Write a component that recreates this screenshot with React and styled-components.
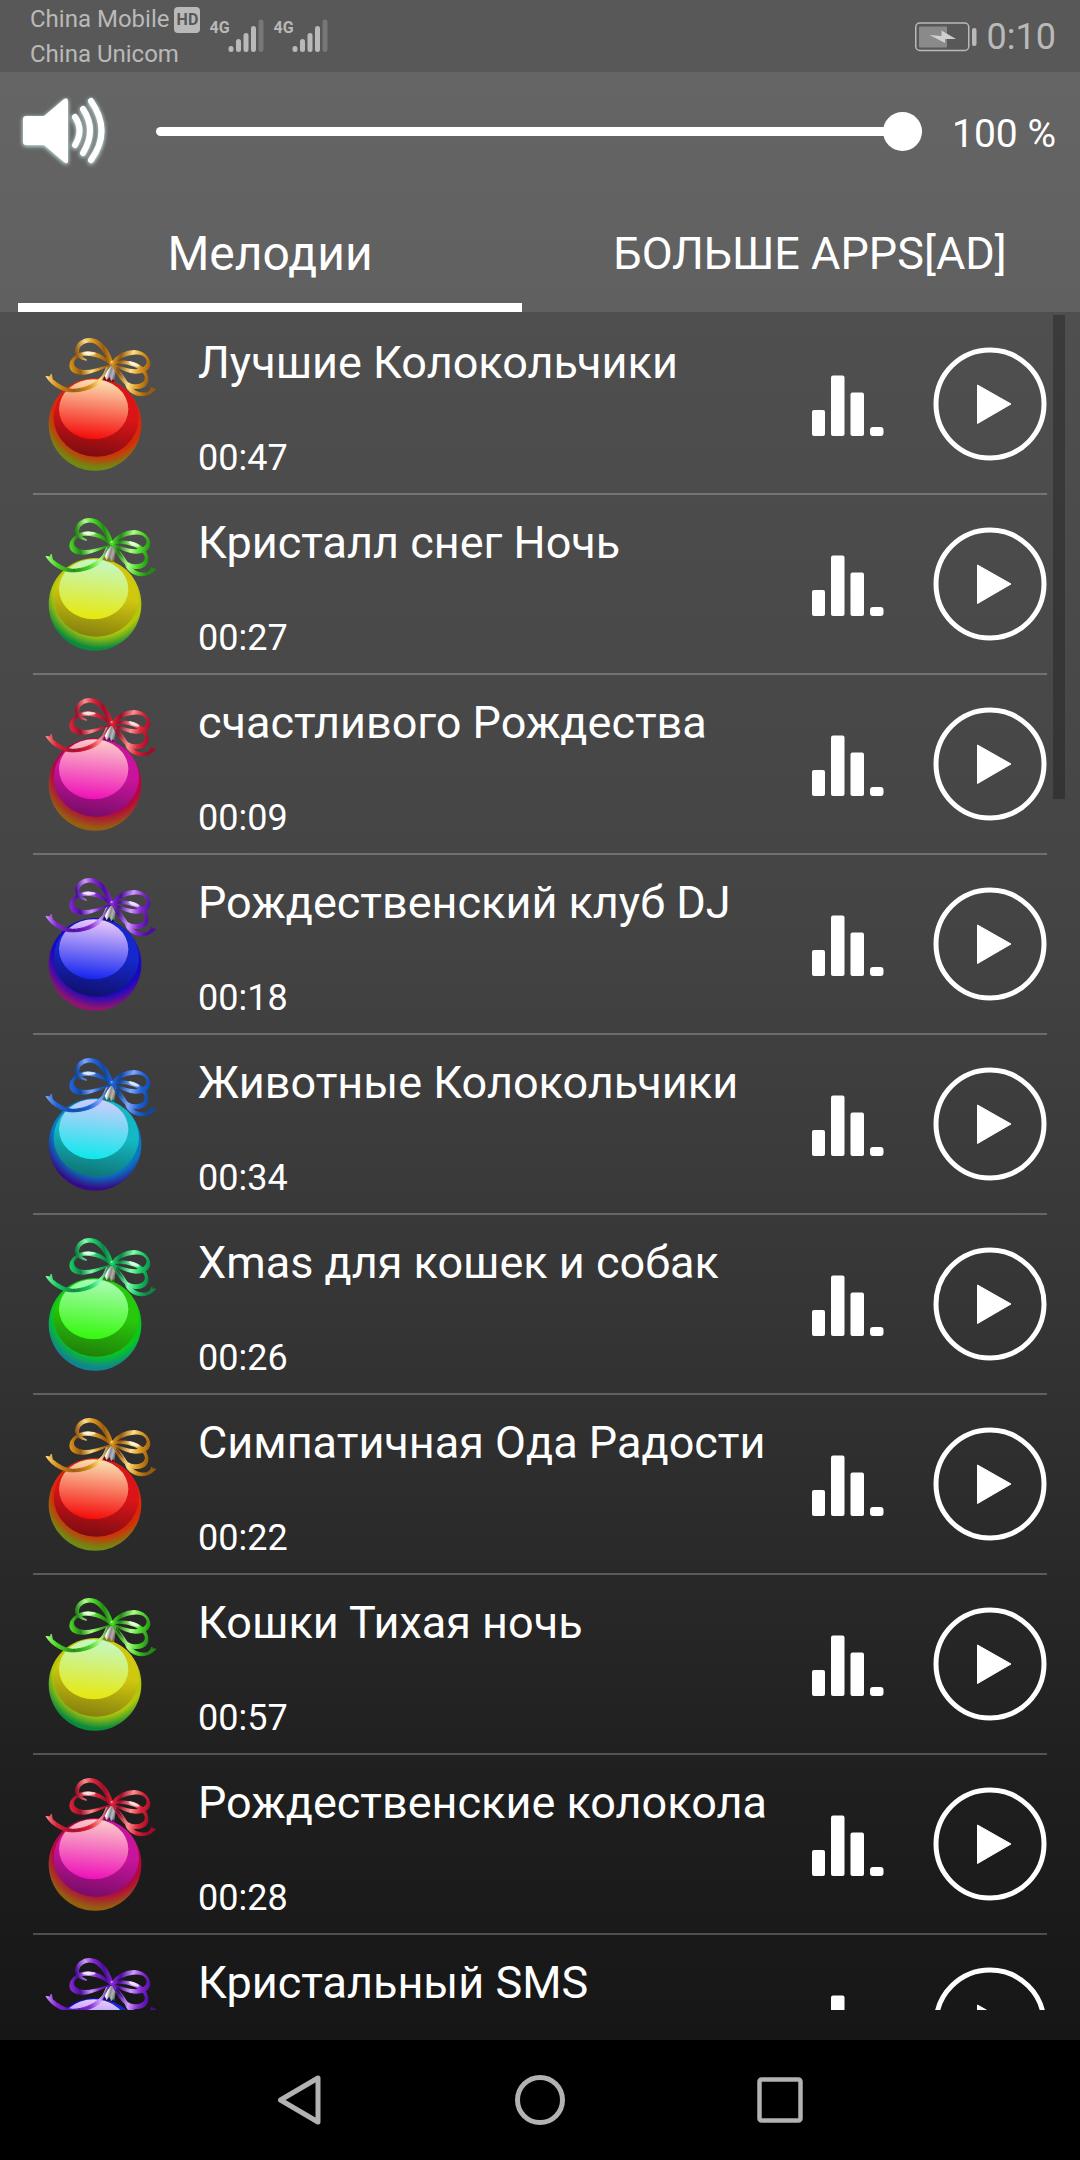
import React, { useId, useState } from "react";
import styled, { createGlobalStyle } from "styled-components";

const GlobalStyle = createGlobalStyle`
  * {
    box-sizing: border-box;
  }
  body {
    margin: 0;
    background: #000;
    color: #fff;
    font-family: Roboto, "Noto Sans", sans-serif;
  }
  button {
    padding: 0;
    border: none;
    background: none;
    color: inherit;
    font-family: inherit;
  }
`;

const Screen = styled.div`
  height: 100vh;
  display: flex;
  flex-direction: column;
`;

const StatusBar = styled.header`
  height: 72px;
  display: flex;
  align-items: center;
  justify-content: space-between;
  padding: 2px 24px 0 30px;
  background: #585858;
  color: #b9b9b9;
`;

const StatusGroup = styled.div`
  display: flex;
  align-items: center;
  gap: ${(props) => props.$gap}px;
`;

const Carriers = styled.div`
  font-size: 24px;
  line-height: 35px;
`;

const Carrier = styled.div`
  display: flex;
  align-items: center;
  gap: 5px;
`;

const HdBadge = styled.span`
  width: 26px;
  height: 26px;
  border-radius: 4px;
  background: #b9b9b9;
  color: #585858;
  font-size: 16px;
  font-weight: 700;
  line-height: 26px;
  text-align: center;
`;

const Signal = styled.div`
  display: flex;
  align-items: flex-start;
  height: 36px;
`;

const SignalType = styled.span`
  width: 19px;
  font-family: "Liberation Sans Narrow", Roboto, sans-serif;
  font-size: 16px;
  font-weight: 700;
  line-height: 18px;
`;

const Clock = styled.span`
  font-size: 36px;
  line-height: 42px;
`;

const Top = styled.section`
  background: linear-gradient(#656565, #606060);
`;

const VolumeBar = styled.label`
  height: 126px;
  display: flex;
  align-items: center;
  padding: 0 24px 8px 18px;
`;

const VolumeIcon = styled.svg`
  flex: none;
  width: 90px;
  height: 72px;
  filter: drop-shadow(0 1px 2px #dff);
`;

const Slider = styled.input`
  flex: 1;
  min-width: 0;
  height: 39px;
  margin: 0 30px 0 48px;
  appearance: none;
  background: none;

  &::-webkit-slider-runnable-track {
    height: 9px;
    border-radius: 5px;
    background: #fff;
  }
  &::-webkit-slider-thumb {
    appearance: none;
    width: 39px;
    height: 39px;
    margin-top: -15px;
    border-radius: 50%;
    background: #fff;
  }
`;

const Percent = styled.span`
  padding-top: 6px;
  font-size: 39px;
  line-height: 46px;
`;

const Tabs = styled.nav`
  display: flex;
  gap: 36px;
  height: 114px;
  padding: 0 18px;
`;

const Tab = styled.button`
  flex: 1;
  padding-top: ${(props) => (props.$active ? 7 : 0)}px;
  padding-bottom: ${(props) => (props.$active ? 0 : 2)}px;
  border-bottom: ${(props) => (props.$active ? "9px solid #fff" : "none")};
  font-size: ${(props) => (props.$active ? 48 : 45)}px;
  line-height: 56px;
`;

const ListArea = styled.main`
  position: relative;
  flex: 1;
  min-height: 0;
  display: flex;
  padding: 3px 33px 30px;
  background: linear-gradient(#4f4f4f, #444 35%, #353535 58%, #1f1f1f 85%, #161616);
`;

const List = styled.ul`
  flex: 1;
  margin: 0;
  padding: 0;
  list-style: none;
  overflow-y: auto;
  scrollbar-width: none;
`;

const ScrollThumb = styled.div`
  position: absolute;
  top: 3px;
  right: 15px;
  width: 12px;
  height: 28%;
  background: rgba(0, 0, 0, 0.25);
`;

const Row = styled.li`
  height: 180px;
  display: flex;
  align-items: center;
  padding-left: 12px;
  border-bottom: 2px solid rgba(255, 255, 255, 0.23);
`;

const Bauble = styled.svg`
  flex: none;
  width: 115px;
  height: 140px;
`;

const Info = styled.div`
  flex: 1;
  display: flex;
  flex-direction: column;
  justify-content: space-between;
  height: 100%;
  margin-left: 38px;
  padding: 21px 0 14px;
  white-space: nowrap;
`;

const Title = styled.span`
  font-size: 45px;
  line-height: 54px;
`;

const Duration = styled.span`
  font-size: 36px;
  line-height: 42px;
`;

const IconButton = styled.button`
  flex: none;
  margin-left: ${(props) => props.$space || 0}px;

  svg {
    display: block;
  }
`;

const NavBar = styled.footer`
  height: 120px;
  display: flex;
  justify-content: center;
  background: #000;
`;

const NavButton = styled.button`
  width: 240px;

  svg {
    display: block;
    margin: 0 auto;
  }
`;

const palettes = {
  red: {
    rim: "#6f8a12", outer: "#d82a08", body: "#dc1418", deep: "#7c0c10",
    low: "#f50a08", high: "#fbe3b4", dark: "#9a5a0c", mid: "#d8931c", light: "#ffe08a", cap: "#b9b4c8",
  },
  yellow: {
    rim: "#0a8a3c", outer: "#b4c80a", body: "#d0c80e", deep: "#86800e",
    low: "#e6e80c", high: "#c4f8c8", dark: "#228a14", mid: "#4cd428", light: "#b0ff8a", cap: "#b8a8a4",
  },
  pink: {
    rim: "#946010", outer: "#b4083c", body: "#c8149c", deep: "#780c68",
    low: "#ee10b8", high: "#fcccc8", dark: "#a00c28", mid: "#dc2438", light: "#ff9090", cap: "#b4bcc8",
  },
  blue: {
    rim: "#901470", outer: "#1808c4", body: "#1428cc", deep: "#10106c",
    low: "#1424f0", high: "#eccafc", dark: "#4c0ca0", mid: "#8428d0", light: "#d09cff", cap: "#a8b8a8",
  },
  cyan: {
    rim: "#340c88", outer: "#0878c0", body: "#14b8c4", deep: "#0e7474",
    low: "#0ce8ec", high: "#d0ccfc", dark: "#0c48a8", mid: "#2464d8", light: "#80a8ff", cap: "#bcb8a0",
  },
  green: {
    rim: "#108490", outer: "#08c81c", body: "#28c80c", deep: "#208008",
    low: "#34f80c", high: "#acfcb4", dark: "#0c8444", mid: "#1ccc64", light: "#84ffac", cap: "#bca8a0",
  },
};

const tracks = [
  { title: "Лучшие Колокольчики", time: "00:47", color: "red" },
  { title: "Кристалл снег Ночь", time: "00:27", color: "yellow" },
  { title: "счастливого Рождества", time: "00:09", color: "pink" },
  { title: "Рождественский клуб DJ", time: "00:18", color: "blue" },
  { title: "Животные Колокольчики", time: "00:34", color: "cyan" },
  { title: "Xmas для кошек и собак", time: "00:26", color: "green" },
  { title: "Симпатичная Ода Радости", time: "00:22", color: "red" },
  { title: "Кошки Тихая ночь", time: "00:57", color: "yellow" },
  { title: "Рождественские колокола", time: "00:28", color: "pink" },
  { title: "Кристальный SMS", time: "00:18", color: "blue" },
];

function Ornament({ color }) {
  const id = useId();
  const c = palettes[color];
  const url = (name) => `url(#${id}${name})`;

  return (
    <Bauble viewBox="75 42 345 420" aria-hidden="true">
      <defs>
        <radialGradient id={id + "rim"} gradientUnits="userSpaceOnUse" cx="240" cy="265" r="190">
          <stop offset="0.74" stopColor={c.outer} />
          <stop offset="0.95" stopColor={c.rim} />
        </radialGradient>
        <linearGradient id={id + "body"} x1="0.62" y1="0" x2="0.42" y2="1">
          <stop offset="0.45" stopColor={c.body} />
          <stop offset="1" stopColor={c.deep} />
        </linearGradient>
        <linearGradient id={id + "shine"} x1="0.56" y1="0" x2="0.44" y2="1">
          <stop offset="0" stopColor={c.high} />
          <stop offset="1" stopColor={c.low} />
        </linearGradient>
        <linearGradient id={id + "ribbon"} gradientUnits="userSpaceOnUse" x1="150" y1="130" x2="275" y2="105">
          <stop offset="0" stopColor={c.mid} />
          <stop offset="0.2" stopColor={c.dark} />
          <stop offset="0.45" stopColor={c.light} />
          <stop offset="0.65" stopColor={c.mid} />
          <stop offset="0.85" stopColor={c.dark} />
          <stop offset="1" stopColor={c.mid} />
        </linearGradient>
        <linearGradient id={id + "ribbon2"} gradientUnits="userSpaceOnUse" x1="275" y1="130" x2="392" y2="150">
          <stop offset="0" stopColor={c.mid} />
          <stop offset="0.2" stopColor={c.dark} />
          <stop offset="0.5" stopColor={c.light} />
          <stop offset="0.75" stopColor={c.mid} />
          <stop offset="1" stopColor={c.dark} />
        </linearGradient>
        <linearGradient id={id + "tail"} gradientUnits="userSpaceOnUse" x1="78" y1="180" x2="270" y2="150">
          <stop offset="0" stopColor={c.light} />
          <stop offset="0.15" stopColor={c.mid} />
          <stop offset="0.4" stopColor={c.dark} />
          <stop offset="0.65" stopColor={c.mid} />
          <stop offset="0.82" stopColor={c.light} />
          <stop offset="1" stopColor={c.dark} />
        </linearGradient>
        <linearGradient id={id + "cap"} x1="0" y1="0.3" x2="1" y2="0.6">
          <stop offset="0" stopColor="#777" />
          <stop offset="0.25" stopColor={c.cap} />
          <stop offset="0.4" stopColor="#fff" />
          <stop offset="0.6" stopColor="#888" />
          <stop offset="0.75" stopColor={c.cap} />
          <stop offset="1" stopColor="#555" />
        </linearGradient>
      </defs>

      <circle cx="225" cy="313" r="139" fill={url("rim")} />
      <ellipse cx="229" cy="293" rx="128" ry="117" fill={url("body")} />
      <ellipse cx="221" cy="268" rx="104" ry="90" fill={url("shine")} />
      <path d="M260 137 L289 139 L283 183 Q262 188 243 176 Z" fill={url("cap")} />
      <path d="M243 176 L254 168 L260 181 L268 170 L274 184 L280 176 L283 186 Q262 188 243 176" fill={c.deep} />

      <g fillRule="evenodd" strokeWidth="4" strokeLinejoin="round">
        {/* left loops */}
        <path
          fill={url("ribbon")}
          stroke={url("ribbon")}
          d="M277 128 C266 84 236 54 206 56 C178 59 164 79 168 98 C171 109 182 118 199 120 C184 113 173 103 175 90 C179 73 197 63 216 66 C240 71 255 99 270 128 Z"
        />
        <path
          fill={url("ribbon")}
          stroke={url("ribbon")}
          d="M277 132 C251 106 226 95 202 96 C171 98 150 118 150 138 C151 155 170 165 193 162 C221 159 251 145 277 132 C248 143 217 153 191 152 C169 150 158 140 160 126 C165 109 190 103 211 106 C235 109 255 119 270 132 Z"
        />
        {/* right loops */}
        <path
          fill={url("ribbon2")}
          stroke={url("ribbon2")}
          d="M275 127 C292 106 315 92 343 92 C371 94 389 113 389 133 C388 150 368 160 346 159 C320 156 297 145 275 130 C299 142 323 149 347 150 C366 149 383 139 382 123 C378 106 360 99 340 102 C316 105 294 115 279 129 Z"
        />
        <path
          fill={url("ribbon2")}
          stroke={url("ribbon2")}
          d="M275 127 C301 121 336 122 358 136 C376 148 386 168 383 184 C379 199 363 207 344 205 C315 200 294 171 277 134 C298 168 317 192 342 195 C361 196 376 188 377 174 C376 158 361 147 345 139 C323 130 298 128 276 131 Z"
        />
      </g>

      {/* tails */}
      <g strokeWidth="3" strokeLinejoin="round">
        <path
          fill={url("tail")}
          stroke={url("tail")}
          d="M268 134 C257 153 250 166 239 176 C217 196 188 207 158 208 C132 205 114 192 97 178 L94 162 L90 171 L78 169 C90 189 112 208 146 215 C179 218 216 208 238 191 C249 178 257 153 272 136 Z"
        />
        <path
          fill={url("ribbon2")}
          stroke={url("ribbon2")}
          d="M281 136 C301 153 312 171 321 186 C335 210 355 221 376 219 C387 217 391 211 396 201 L396 207 L407 207 L397 217 C381 228 362 230 344 223 C323 214 316 199 315 183 C306 164 293 147 281 136 Z"
        />
      </g>
      <ellipse cx="207" cy="100" rx="20" ry="5" fill="#fff" opacity="0.75" />
      <ellipse cx="342" cy="132" rx="17" ry="5" fill="#fff" opacity="0.75" transform="rotate(22 342 132)" />
      <ellipse cx="276" cy="129" rx="7" ry="8" fill={c.mid} />
      <ellipse cx="275" cy="126" rx="3" ry="3" fill={c.light} />
    </Bauble>
  );
}

function SignalBars() {
  return (
    <svg width="36" height="34" viewBox="0 0 36 34" strokeWidth="5" strokeLinecap="round" stroke="#b9b9b9" aria-hidden="true">
      <path d="M3 29.5v1M10.5 22.5v8M18 16.5v14M25.5 9.5v21" />
      <path d="M33 3v27.5" stroke="#777" />
    </svg>
  );
}

function Battery() {
  return (
    <svg width="62" height="30" viewBox="0 0 62 30" aria-hidden="true">
      <rect x="0.75" y="1" width="53" height="27.5" rx="4" fill="none" stroke="#b9b9b9" strokeWidth="1.5" />
      <rect x="4" y="4.5" width="28" height="21" rx="1" fill="#8a8a8a" />
      <path d="M14.5 13 L26.5 14 L26.5 8.5 L41 17 L30 17 L30 21 Z" fill="#cfcfcf" />
      <rect x="57" y="6" width="4.5" height="18" rx="2" fill="#b9b9b9" />
    </svg>
  );
}

function TrackRow({ track }) {
  return (
    <Row>
      <Ornament color={track.color} />
      <Info>
        <Title>{track.title}</Title>
        <Duration>{track.time}</Duration>
      </Info>
      <IconButton aria-label={`Эквалайзер: ${track.title}`}>
        <svg width="72" height="64" viewBox="0 0 72 64" fill="#fff">
          <rect x="0" y="38" width="13" height="26" rx="2" />
          <rect x="19" y="3.5" width="13.5" height="60.5" rx="2" />
          <rect x="38.5" y="20.5" width="13.5" height="43.5" rx="2" />
          <rect x="58" y="55" width="13.5" height="9" rx="3" />
        </svg>
      </IconButton>
      <IconButton $space={49} aria-label={`Играть: ${track.title}`}>
        <svg width="114" height="114" viewBox="0 0 114 114" fill="#fff">
          <circle cx="57" cy="57" r="54" fill="none" stroke="#fff" strokeWidth="5" />
          <path d="M44.5 38 L78 57 L44.5 76.5 Z" stroke="#fff" strokeLinejoin="round" />
        </svg>
      </IconButton>
    </Row>
  );
}

function App() {
  const [volume, setVolume] = useState(100);

  return (
    <>
      <GlobalStyle />
      <Screen>
        <StatusBar>
          <StatusGroup $gap={9}>
            <Carriers>
              <Carrier>
                China Mobile <HdBadge>HD</HdBadge>
              </Carrier>
              <Carrier>China Unicom</Carrier>
            </Carriers>
            <Signal>
              <SignalType>4G</SignalType>
              <SignalBars />
            </Signal>
            <Signal>
              <SignalType>4G</SignalType>
              <SignalBars />
            </Signal>
          </StatusGroup>
          <StatusGroup $gap={10}>
            <Battery />
            <Clock>0:10</Clock>
          </StatusGroup>
        </StatusBar>

        <Top>
          <VolumeBar>
            <VolumeIcon viewBox="0 0 90 72" aria-hidden="true">
              <path
                d="M8 21 H26 L46 4 Q50 2 50 6 V66 Q50 70 46 67 L26 50 H8 Q5 50 5 47 V24 Q5 21 8 21 Z"
                fill="#fff"
              />
              <path
                d="M57 22 Q66 35 57 50 M65 14 Q79 35 65 58 M73 6 Q94 36 73 65"
                fill="none"
                stroke="#fff"
                strokeWidth="6"
                strokeLinecap="round"
              />
            </VolumeIcon>
            <Slider
              type="range"
              min="0"
              max="100"
              value={volume}
              aria-label="Громкость"
              onChange={(e) => setVolume(e.target.value)}
            />
            <Percent>{volume} %</Percent>
          </VolumeBar>
          <Tabs>
            <Tab $active>Мелодии</Tab>
            <Tab>БОЛЬШЕ APPS[AD]</Tab>
          </Tabs>
        </Top>

        <ListArea>
          <List>
            {tracks.map((track) => (
              <TrackRow key={track.title} track={track} />
            ))}
          </List>
          <ScrollThumb />
        </ListArea>

        <NavBar>
          <NavButton aria-label="Назад">
            <svg width="52" height="52" viewBox="0 0 52 52" fill="none" stroke="#b2b2b2" strokeWidth="5" strokeLinejoin="round">
              <path d="M44 4 V48 L6.5 26 Z" />
            </svg>
          </NavButton>
          <NavButton aria-label="Домой">
            <svg width="52" height="52" viewBox="0 0 52 52" fill="none" stroke="#b2b2b2" strokeWidth="5">
              <circle cx="26" cy="26" r="22.5" />
            </svg>
          </NavButton>
          <NavButton aria-label="Недавние">
            <svg width="52" height="52" viewBox="0 0 52 52" fill="none" stroke="#b2b2b2" strokeWidth="4.5">
              <rect x="5.5" y="5.5" width="41" height="41" rx="2" />
            </svg>
          </NavButton>
        </NavBar>
      </Screen>
    </>
  );
}

export default App;
